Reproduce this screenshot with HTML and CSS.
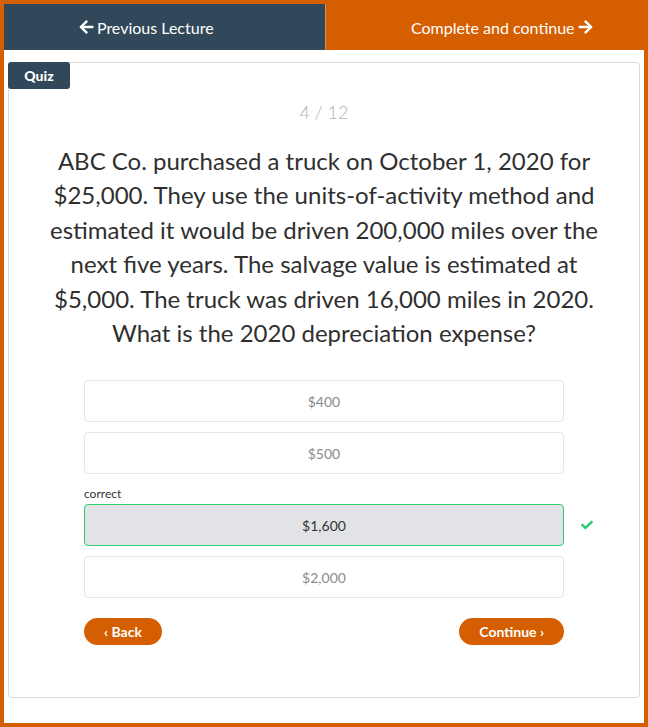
FILE: index.html
```html
<!DOCTYPE html>
<html>
<head>
<meta charset="utf-8">
<link rel="stylesheet" href="styles.css">
</head>
<body>
<div class="page">
  <div class="topbar">
    <a class="nav nav-prev"><svg class="arrow" viewBox="0 0 448 512"><path d="M257.5 445.1l-22.2 22.2c-9.4 9.4-24.6 9.4-33.9 0L7 273c-9.4-9.4-9.4-24.6 0-33.9L201.4 44.7c9.4-9.4 24.6-9.4 33.900 0l22.2 22.2c9.5 9.5 9.3 25-.4 34.3L136.6 216H424c13.3 0 24 10.7 24 24v32c0 13.3-10.7 24-24 24H136.6l120.5 114.8c9.8 9.3 10 24.8.4 34.3z"/></svg>Previous Lecture</a>
    <a class="nav nav-next">Complete and continue<svg class="arrow" viewBox="0 0 448 512"><path d="M190.5 66.9l22.2-22.2c9.4-9.4 24.6-9.4 33.9 0L441 239c9.4 9.4 9.4 24.6 0 33.9L246.6 467.3c-9.4 9.4-24.6 9.4-33.9 0l-22.2-22.2c-9.5-9.5-9.3-25 .4-34.3L311.4 296H24c-13.3 0-24-10.7-24-24v-32c0-13.3 10.7-24 24-24h287.4L190.9 101.2c-9.8-9.3-10-24.8-.4-34.3z"/></svg></a>
  </div>
  <div class="card">
    <div class="badge">Quiz</div>
    <div class="counter">4 / 12</div>
    <div class="question">ABC Co. purchased a truck on October 1, 2020 for $25,000. They use the units-of-activity method and estimated it would be driven 200,000 miles over the next five years. The salvage value is estimated at $5,000. The truck was driven 16,000 miles in 2020. What is the 2020 depreciation expense?</div>
    <div class="answers">
      <div class="answer">$400</div>
      <div class="answer">$500</div>
      <div class="label">correct</div>
      <div class="answer answer-correct">$1,600
        <svg class="check" viewBox="0 0 512 512"><path d="M173.9 439.4l-166.4-166.4c-10-10-10-26.2 0-36.2l36.2-36.2c10-10 26.2-10 36.2 0L192 312.7 432.1 72.6c10-10 26.2-10 36.2 0l36.2 36.2c10 10 10 26.2 0 36.2L210.1 439.4c-10 10-26.2 10-36.2 0z"/></svg>
      </div>
      <div class="answer">$2,000</div>
      <div class="buttons">
        <a class="pill">‹ Back</a>
        <a class="pill">Continue ›</a>
      </div>
    </div>
  </div>
</div>
</body>
</html>
```
FILE: styles.css
```css
html, body {
  margin: 0;
  padding: 0;
}
body {
  background: #d55e00;
  padding: 4px;
  font-family: "Lato", "Open Sans", sans-serif;
}
.page {
  background: #fff;
  height: 719px;
  display: flex;
  flex-direction: column;
}
.topbar {
  display: flex;
  height: 46px;
}
.nav {
  flex: 1;
  display: flex;
  align-items: center;
  justify-content: center;
  color: #fff;
  font-size: 16px;
  gap: 3px;
}
.nav-prev {
  background: #304859;
  padding-right: 36px;
}
.nav-next {
  background: #d55e00;
  border-left: 1px solid #e08a4c;
  padding-left: 34px;
}
.arrow {
  width: 15px;
  height: 16px;
  fill: #fff;
}
.card {
  position: relative;
  margin: 12px 4px 0 4px;
  height: 634px;
  border: 1px solid #d9d9d9;
  border-radius: 4px;
  display: flex;
  flex-direction: column;
  align-items: center;
}
.badge {
  position: absolute;
  left: -1px;
  top: -1px;
  width: 62px;
  height: 27px;
  background: #304859;
  color: #fff;
  border-radius: 3px;
  font-weight: 900;
  font-size: 14px;
  display: flex;
  align-items: center;
  justify-content: center;
}
.counter {
  margin-top: 37px;
  color: #b3b3b3;
  font-size: 18px;
  font-weight: 300;
  line-height: 24px;
}
.question {
  margin-top: 20px;
  width: 564px;
  text-align: center;
  color: #2f2f2f;
  font-size: 24px;
  line-height: 34.4px;
}
.answers {
  margin-top: 30px;
  width: 480px;
  display: flex;
  flex-direction: column;
  gap: 10px;
}
.answer {
  position: relative;
  height: 40px;
  border: 1px solid #e6e6e6;
  border-radius: 4px;
  display: flex;
  align-items: center;
  justify-content: center;
  color: #8a8a8a;
  font-size: 14px;
}
.label {
  font-size: 12px;
  color: #333;
  margin-top: 3px;
  margin-bottom: -7px;
  line-height: 14px;
}
.answer-correct {
  background: #e1e3e7;
  border-color: #2ecc71;
  color: #333;
}
.check {
  position: absolute;
  right: -31px;
  top: 14px;
  width: 14px;
  height: 12px;
  fill: #2ecc71;
}
.buttons {
  margin-top: 10px;
  display: flex;
  justify-content: space-between;
}
.pill {
  background: #d55e00;
  color: #fff;
  font-size: 14px;
  font-weight: 700;
  height: 27px;
  border-radius: 14px;
  padding: 0 20px;
  display: flex;
  align-items: center;
}
```
